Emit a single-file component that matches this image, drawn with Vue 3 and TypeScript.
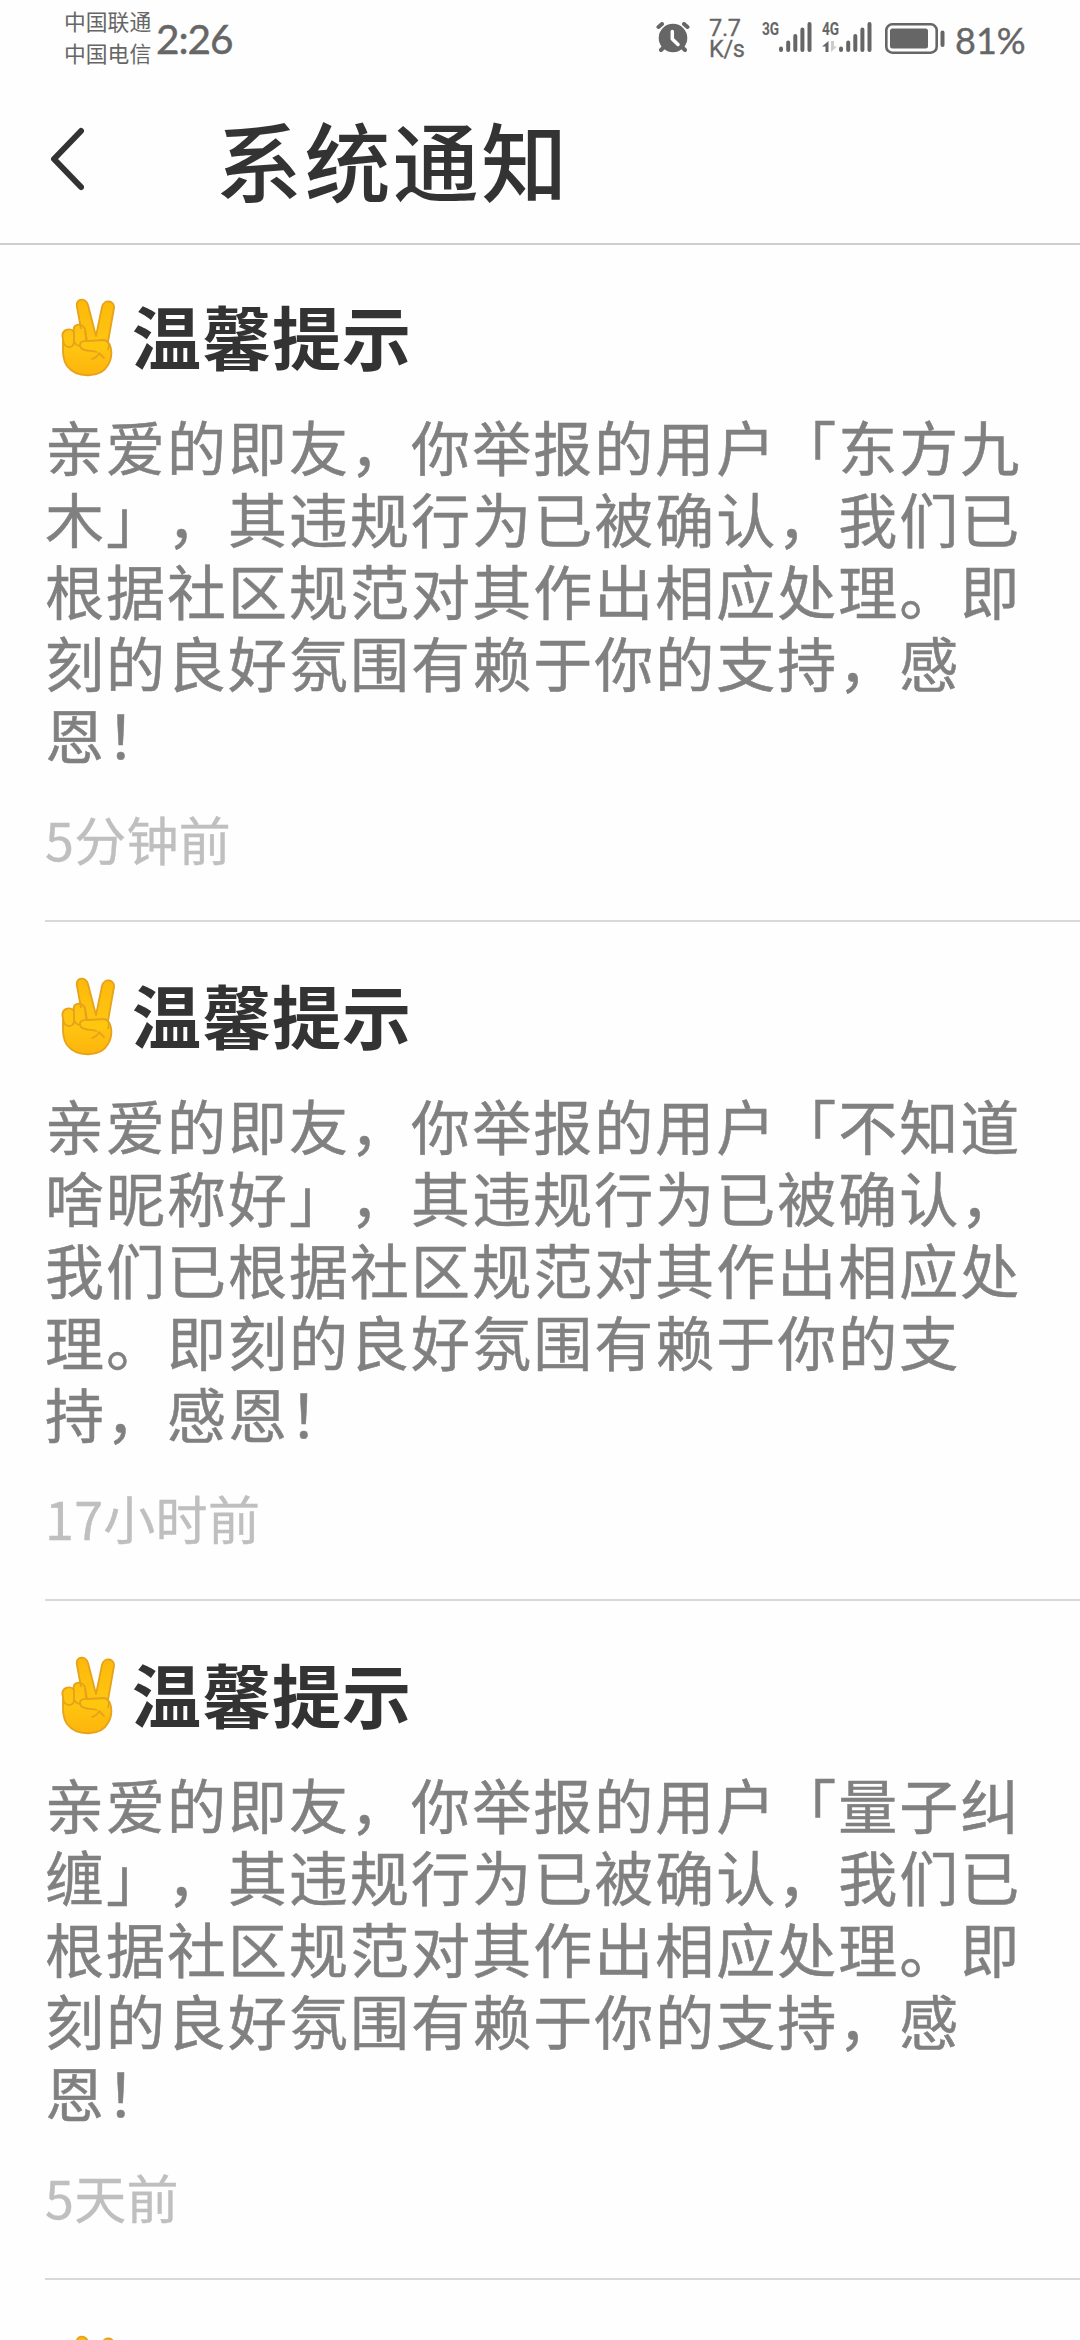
<script setup lang="ts">
interface Notice {
  id: number
  title: string
  lines: string[]
  time: string
}

const notices: Notice[] = [
  {
    id: 1,
    title: '温馨提示',
    lines: [
      '亲爱的即友，你举报的用户「东方九',
      '木」，其违规行为已被确认，我们已',
      '根据社区规范对其作出相应处理。即',
      '刻的良好氛围有赖于你的支持，感',
      '恩！',
    ],
    time: '5分钟前',
  },
  {
    id: 2,
    title: '温馨提示',
    lines: [
      '亲爱的即友，你举报的用户「不知道',
      '啥昵称好」，其违规行为已被确认，',
      '我们已根据社区规范对其作出相应处',
      '理。即刻的良好氛围有赖于你的支',
      '持，感恩！',
    ],
    time: '17小时前',
  },
  {
    id: 3,
    title: '温馨提示',
    lines: [
      '亲爱的即友，你举报的用户「量子纠',
      '缠」，其违规行为已被确认，我们已',
      '根据社区规范对其作出相应处理。即',
      '刻的良好氛围有赖于你的支持，感',
      '恩！',
    ],
    time: '5天前',
  },
  { id: 4, title: '', lines: [], time: '' },
]
</script>

<template>
  <div class="screen">
    <header class="status">
      <div class="carriers">
        <span>中国联通</span>
        <span>中国电信</span>
      </div>
      <span class="clock">2:26</span>
      <div class="spacer"></div>
      <svg class="alarm" width="34" height="32" viewBox="0 0 34 32">
        <g stroke="#666" stroke-width="4" stroke-linecap="round">
          <path d="M2.500 5 L6 2 M28 2 L31.500 5 M7 26 L5 28 M27 26 L29 28" />
        </g>
        <circle cx="17" cy="16" r="14.300" fill="#666" />
        <path d="M16.300 9.500 V17 L22 22.500" fill="none" stroke="#fff" stroke-width="3.500" stroke-linecap="round" stroke-linejoin="round" />
      </svg>
      <div class="speed"><span>7.7</span><span>K/s</span></div>
      <div class="signal">
        <div class="net"><span>3G</span></div>
        <svg width="34" height="31" viewBox="0 0 34 31">
          <path d="M2 26.500 V28 M9.200 20.500 V28 M16.300 14 V28 M23.400 7.500 V28 M30.500 2 V28" stroke="#666" stroke-width="4" stroke-linecap="round" />
        </svg>
      </div>
      <div class="signal second">
        <div class="net">
          <span>4G</span>
          <svg width="17" height="12" viewBox="0 0 17 12">
            <path d="M6.500 0 V11 H3.500 V5.500 H0 Z" fill="#666" />
            <path d="M9 0 V11 L15 5.500 H12 V0 Z" fill="#ccc" />
          </svg>
        </div>
        <svg width="34" height="31" viewBox="0 0 34 31">
          <path d="M2 26.500 V28 M9.200 20.500 V28 M16.300 14 V28 M23.400 7.500 V28 M30.500 2 V28" stroke="#666" stroke-width="4" stroke-linecap="round" />
        </svg>
      </div>
      <svg class="battery" width="60" height="32" viewBox="0 0 60 32">
        <rect x="1.300" y="1.300" width="50.400" height="28.400" rx="6" fill="none" stroke="#666" stroke-width="2.600" />
        <rect x="5" y="5.500" width="38" height="20" rx="2.500" fill="#666" />
        <rect x="55.500" y="7.500" width="4" height="16.500" rx="2" fill="#666" />
      </svg>
      <span class="percent">81%</span>
    </header>

    <nav class="bar">
      <svg class="back" width="34" height="64" viewBox="0 0 34 64">
        <path d="M31 4 L4 32 L31 60" fill="none" stroke="#333" stroke-width="6" stroke-linecap="round" stroke-linejoin="round" />
      </svg>
      <h1>系统通知</h1>
    </nav>

    <main>
      <article v-for="n in notices" :key="n.id" class="notice">
        <h2>
          <svg class="hand" width="54" height="80" viewBox="0 0 54 80">
            <defs>
              <linearGradient :id="`skin-${n.id}`" x1="0" y1="0" x2="0" y2="1">
                <stop offset="0" stop-color="#fdb90b" />
                <stop offset="0.6" stop-color="#ffc511" />
                <stop offset="1" stop-color="#fdb50c" />
              </linearGradient>
            </defs>
            <g stroke="#e6a21a" stroke-width="1.800" stroke-linejoin="round">
              <path :fill="`url(#skin-${n.id})`" d="M20 31 L16 9 C14 0 25 -1 27 7 L35 38 L41 9 C43 0 54 3 53 10 L47 44 C52 50 51 61 47 67 C40 80 16 81 6 68 C1 61 2 52 2 41 C-1 31 10 29 13 34 C11 26 20 24 24 31 L26 43" />
              <path d="M13 34 V44 C13 51 3 51 2 42 M13 43 C16 51 26 48 25 41 L24 32" fill="none" />
              <path d="M36 54 C31 52 24 54 20 50 C17 45 21 42 27 43 L43 42 C48 43 49 47 47 52" fill="#ffc60e" />
              <path d="M31 61 C34 60 37 58 38 55 L43 60" fill="none" stroke-linecap="round" />
            </g>
          </svg>
          <span>{{ n.title }}</span>
        </h2>
        <p class="body"><span v-for="(line, i) in n.lines" :key="i">{{ line }}</span></p>
        <time>{{ n.time }}</time>
      </article>
    </main>
  </div>
</template>

<style>
html,
body {
  margin: 0;
  overflow: hidden;
  background: #fefefe;
}
</style>

<style scoped>
.screen {
  width: 1080px;
  height: 2340px;
  overflow: hidden;
  background: #fefefe;
  font-family: "Noto Sans CJK SC", sans-serif;
  text-spacing-trim: space-all;
  display: flex;
  flex-direction: column;
}
.status {
  flex: none;
  display: flex;
  align-items: flex-start;
  box-sizing: border-box;
  height: 80px;
  padding: 0 57px 0 64px;
  color: #666;
  white-space: nowrap;
}
.carriers {
  display: flex;
  flex-direction: column;
  margin-top: 5px;
  width: 92px;
  font-size: 21.800px;
  line-height: 32px;
}
.clock {
  font-family: Lato, sans-serif;
  font-size: 40.500px;
  line-height: 50px;
  margin-top: 14px;
  letter-spacing: -1px;
  -webkit-text-stroke: 0.500px #666;
}
.spacer {
  flex: 1;
}
.alarm {
  margin: 22px 19px 0 0;
}
.speed {
  display: flex;
  flex-direction: column;
  width: 53px;
  margin-top: 18px;
  font-family: Roboto, sans-serif;
  font-size: 23.500px;
  line-height: 21px;
  letter-spacing: -0.300px;
  -webkit-text-stroke: 0.300px #666;
}
.signal {
  display: flex;
  margin-top: 22px;
  width: 60px;
}
.signal.second {
  width: 63px;
}
.net {
  display: flex;
  flex-direction: column;
  justify-content: space-between;
  width: 17px;
  height: 31px;
  font: 700 19px/14px Roboto, sans-serif;
}
.net span {
  transform: scaleX(0.72);
  transform-origin: 0 0;
}
.battery {
  margin-top: 23px;
}
.percent {
  font-family: Lato, sans-serif;
  font-size: 36px;
  line-height: 44px;
  width: 68px;
  margin: 18px 0 0 10px;
  -webkit-text-stroke: 0.400px #666;
}
.bar {
  flex: none;
  display: flex;
  box-sizing: border-box;
  height: 165px;
  border-bottom: 2px solid #cfcfcf;
  color: #333;
}
.back {
  margin: 47px 0 0 50px;
}
h1 {
  margin: 14px 0 0 132px;
  font-size: 86px;
  line-height: 130px;
  font-weight: 500;
  letter-spacing: 2.400px;
}
.notice {
  box-sizing: border-box;
  height: 679px;
  margin-left: 45px;
  padding-top: 54px;
  border-bottom: 2px solid #d9d9d9;
  white-space: nowrap;
}
.notice:first-child {
  height: 677px;
  padding-top: 52px;
}
h2 {
  display: flex;
  margin: 0;
  height: 104px;
  color: #333;
  font-size: 69px;
  line-height: 80px;
  font-weight: 700;
  letter-spacing: 1px;
}
.hand {
  margin: 1px 0 0 16px;
  flex: none;
}
h2 span {
  margin: -2px 0 0 17px;
}
.body {
  display: flex;
  flex-direction: column;
  height: 360px;
  margin: 9px 0 0;
  color: #808080;
  font-size: 59px;
  line-height: 72px;
  letter-spacing: 2.020px;
  -webkit-text-stroke: 0.500px #808080;
}
time {
  display: block;
  margin-top: 33px;
  color: #bfbfbf;
  font-size: 52px;
  line-height: 72px;
  letter-spacing: 0.300px;
  -webkit-text-stroke: 0.400px #bfbfbf;
}
</style>
